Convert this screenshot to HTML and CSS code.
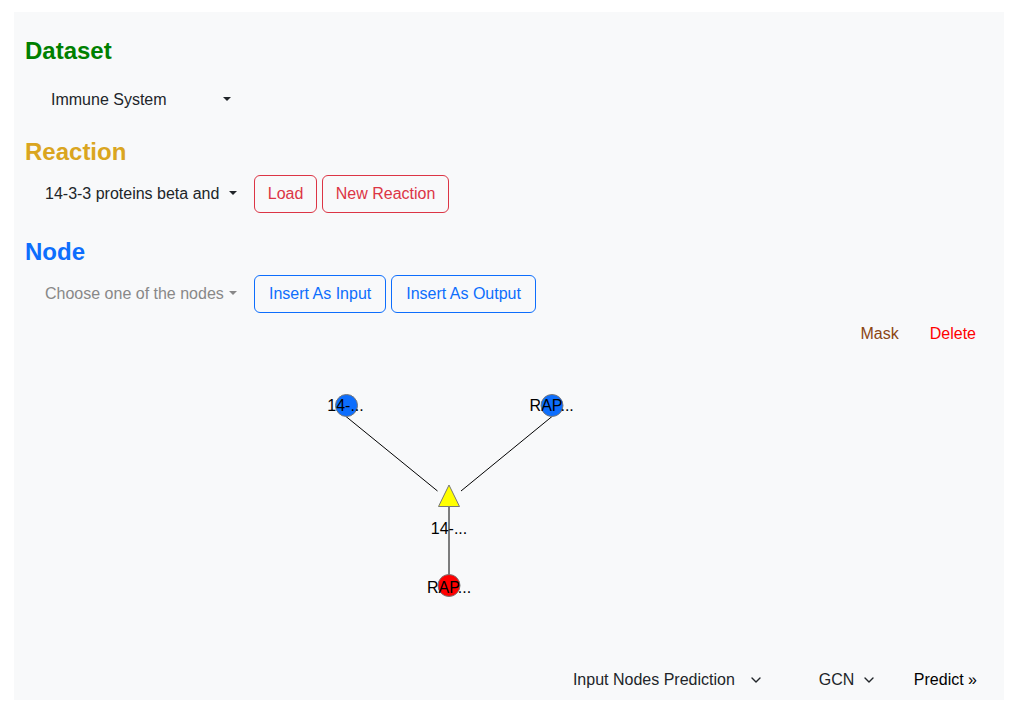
FILE: index.html
```html
<!DOCTYPE html>
<html lang="en">
<head>
<meta charset="utf-8">
<title>Reaction Editor</title>
<link rel="stylesheet" href="styles.css">
</head>
<body>
<div class="panel">
  <section class="sec sec-dataset">
    <h4 class="title title-dataset">Dataset</h4>
    <div class="row row-dataset">
      <button class="dd dd-dataset"><span class="dd-text dd-text-dataset">Immune System</span></button>
    </div>
  </section>
  <section class="sec sec-reaction">
    <h4 class="title title-reaction">Reaction</h4>
    <div class="row">
      <button class="dd dd-wide"><span class="dd-text dd-text-wide">14-3-3 proteins beta and</span></button>
      <button class="btn btn-danger btn-load">Load</button>
      <button class="btn btn-danger btn-new">New Reaction</button>
    </div>
  </section>
  <section class="sec sec-node">
    <h4 class="title title-node">Node</h4>
    <div class="row">
      <button class="dd dd-wide dd-muted"><span class="dd-text dd-text-wide">Choose one of the nodes</span></button>
      <button class="btn btn-primary btn-in">Insert As Input</button>
      <button class="btn btn-primary btn-out">Insert As Output</button>
    </div>
  </section>
  <div class="actions">
    <button class="link link-mask">Mask</button>
    <button class="link link-delete">Delete</button>
  </div>
  <div class="graph">
    <svg class="graph-svg" width="964" height="308" viewBox="25 353 964 308" xmlns="http://www.w3.org/2000/svg">
      <line x1="346" y1="416.5" x2="437.5" y2="491" stroke="#000" stroke-width="1"/>
      <line x1="552" y1="416.5" x2="461" y2="491" stroke="#000" stroke-width="1"/>
      <line x1="449" y1="506.5" x2="449" y2="575" stroke="#000" stroke-width="1"/>
      <circle cx="346.5" cy="405.5" r="11" fill="#0d6efd" stroke="#777" stroke-width="1"/>
      <circle cx="552" cy="405.5" r="11" fill="#0d6efd" stroke="#777" stroke-width="1"/>
      <polygon points="449,485 438.5,506.5 459.5,506.5" fill="#ffff00" stroke="#777" stroke-width="1"/>
      <circle cx="449" cy="585.5" r="11" fill="#ff0000" stroke="#777" stroke-width="1"/>
      <text class="node-label" x="345.5" y="410.7">14-...</text>
      <text class="node-label" x="551.7" y="410.7">RAP...</text>
      <text class="node-label" x="449" y="534">14-...</text>
      <text class="node-label" x="449" y="592.5">RAP...</text>
    </svg>
  </div>
  <div class="bottom">
    <div class="sel sel-task"><span>Input Nodes Prediction</span><svg class="chev" width="10" height="6" viewBox="0 0 10 6"><polyline points="1,1 5,5 9,1" fill="none" stroke="#212529" stroke-width="1.4" stroke-linecap="round" stroke-linejoin="round"/></svg></div>
    <div class="sel sel-model"><span>GCN</span><svg class="chev" width="10" height="6" viewBox="0 0 10 6"><polyline points="1,1 5,5 9,1" fill="none" stroke="#212529" stroke-width="1.4" stroke-linecap="round" stroke-linejoin="round"/></svg></div>
    <button class="predict">Predict &raquo;</button>
  </div>
</div>
</body>
</html>
```

FILE: styles.css
```css
html, body {
  margin: 0;
  padding: 0;
  background: #fff;
}
body {
  font-family: "Liberation Sans", Arial, sans-serif;
  font-size: 16px;
  line-height: 1.5;
  color: #212529;
}
.panel {
  margin: 12px 17px 14px 14px;
  height: 688px;
  box-sizing: border-box;
  background: #f8f9fa;
  padding: 25px 15px 1px 11px;
  display: flex;
  flex-direction: column;
}
.sec { margin: 0; }
.sec-dataset { margin-bottom: 19px; }
.sec-reaction { margin-bottom: 25.5px; }
.title {
  margin: 0 0 8px 0;
  font-size: 24px;
  line-height: 1.2;
  font-weight: 700;
}
.title-dataset { color: #008000; }
.title-reaction { color: #daa520; }
.title-node { color: #0d6efd; }
.row {
  display: flex;
  align-items: center;
  height: 38px;
}
.row-dataset { padding-top: 7px; }
button {
  font-family: inherit;
  font-size: 16px;
  line-height: 24px;
  cursor: pointer;
}
.dd {
  display: inline-block;
  white-space: nowrap;
  background: transparent;
  border: 1px solid transparent;
  padding: 6px 12px;
  margin: 0 4px 0 7px;
  color: #212529;
  text-align: left;
}
.dd::after {
  content: "";
  display: inline-block;
  margin-left: 0.255em;
  vertical-align: 0.255em;
  border-top: 0.3em solid;
  border-right: 0.3em solid transparent;
  border-left: 0.3em solid transparent;
}
.dd-dataset { margin-left: 13px; }
.dd-text {
  display: inline-block;
  vertical-align: top;
  height: 24px;
  overflow: hidden;
  white-space: nowrap;
}
.dd-text-dataset { width: 167.6px; }
.dd-text-wide { width: 180px; }
.dd-muted { color: #888; }
.btn {
  box-sizing: border-box;
  height: 38px;
  padding: 6px 0;
  border-radius: 6px;
  background: transparent;
  border: 1px solid;
  text-align: center;
  margin-right: 5px;
}
.btn-danger { color: #dc3545; border-color: #dc3545; }
.btn-primary { color: #0d6efd; border-color: #0d6efd; }
.btn-load { width: 63px; }
.btn-new { width: 127px; }
.btn-in { width: 132px; }
.btn-out { width: 145px; }
.actions {
  margin-top: 2px;
  display: flex;
  justify-content: flex-end;
  gap: 5px;
  height: 38px;
}
.link {
  background: transparent;
  border: 1px solid transparent;
  padding: 6px 12px;
}
.link-mask { color: #8b4513; }
.link-delete { color: #ff0000; }
.graph {
  flex: 1;
  position: relative;
}
.graph-svg {
  display: block;
  overflow: visible;
}
.node-label {
  font-family: "Liberation Sans", Arial, sans-serif;
  font-size: 16px;
  text-anchor: middle;
  fill: #000;
}
.bottom {
  height: 38px;
  display: flex;
  justify-content: flex-end;
  align-items: center;
}
.sel {
  display: flex;
  align-items: center;
  padding: 6px 12px;
  line-height: 24px;
  color: #212529;
}
.sel-task .chev { margin-left: 16px; }
.sel-task { margin-right: 34px; }
.sel-model .chev { margin-left: 10px; }
.sel-model { padding-right: 27.5px; }
.chev { display: block; }
.predict {
  background: transparent;
  border: 1px solid transparent;
  padding: 6px 11px;
  color: #000;
}
```
